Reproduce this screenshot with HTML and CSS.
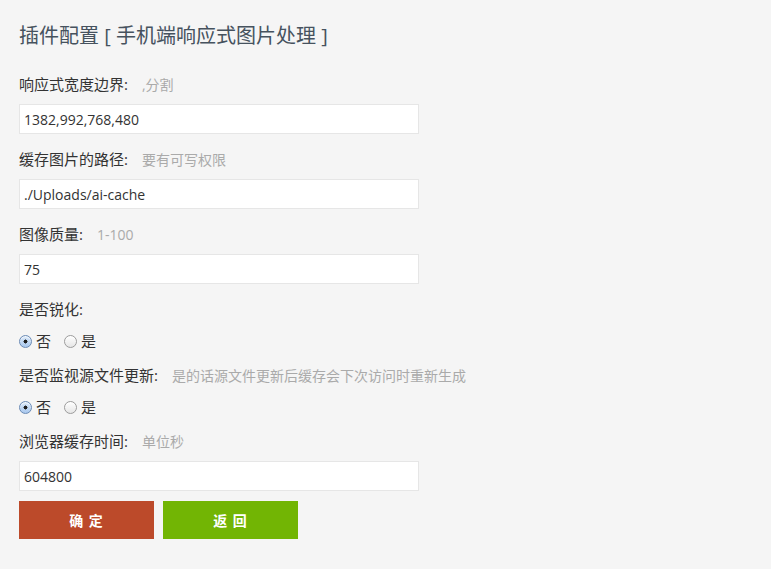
FILE: index.html
```html
<!DOCTYPE html>
<html lang="zh-CN">
<head>
<meta charset="utf-8">
<title>插件配置</title>
<link rel="stylesheet" href="styles.css">
</head>
<body>
<div class="page">
  <h2 class="title">插件配置 [ 手机端响应式图片处理 ]</h2>
  <form class="form">
    <div class="group">
      <div class="label">响应式宽度边界:<span class="hint">,分割</span></div>
      <input class="text" type="text" value="1382,992,768,480">
    </div>
    <div class="group">
      <div class="label">缓存图片的路径:<span class="hint">要有可写权限</span></div>
      <input class="text" type="text" value="./Uploads/ai-cache">
    </div>
    <div class="group">
      <div class="label">图像质量:<span class="hint">1-100</span></div>
      <input class="text" type="text" value="75">
    </div>
    <div class="group group-radio">
      <div class="label">是否锐化:</div>
      <div class="radios">
        <label class="opt"><input class="radio" type="radio" name="sharpen" checked>否</label>
        <label class="opt"><input class="radio" type="radio" name="sharpen">是</label>
      </div>
    </div>
    <div class="group group-radio">
      <div class="label">是否监视源文件更新:<span class="hint">是的话源文件更新后缓存会下次访问时重新生成</span></div>
      <div class="radios">
        <label class="opt"><input class="radio" type="radio" name="watch" checked>否</label>
        <label class="opt"><input class="radio" type="radio" name="watch">是</label>
      </div>
    </div>
    <div class="group group-last">
      <div class="label">浏览器缓存时间:<span class="hint">单位秒</span></div>
      <input class="text" type="text" value="604800">
    </div>
    <div class="actions">
      <button type="button" class="btn btn-ok">确 定</button>
      <button type="button" class="btn btn-back">返 回</button>
    </div>
  </form>
</div>
</body>
</html>
```
FILE: styles.css
```css
html, body {
  margin: 0;
  padding: 0;
  background: #f5f5f5;
}
body {
  font-family: "Open Sans", "Noto Sans CJK SC", sans-serif;
  color: #333;
}
.page {
  padding: 22px 19px 0;
}
.title {
  margin: 0 0 24px;
  font-size: 20px;
  line-height: 28px;
  font-weight: normal;
  color: #46525e;
}
.form {
  margin: 0;
}
.group {
  margin-bottom: 15px;
}
.group-radio {
  margin-bottom: 12px;
}
.group-last {
  margin-bottom: 10px;
}
.label {
  font-size: 15px;
  line-height: 20px;
  height: 20px;
  margin-bottom: 10px;
  color: #333;
  white-space: nowrap;
}
.hint {
  margin-left: 14px;
  font-size: 14px;
  color: #aaa;
}
.text {
  display: block;
  box-sizing: border-box;
  width: 400px;
  height: 30px;
  margin: 0;
  padding: 0 4px;
  border: 1px solid #e6e6e6;
  background: #fff;
  font-family: "Open Sans", "Noto Sans CJK SC", sans-serif;
  font-size: 14px;
  color: #333;
  outline: none;
}
.radios {
  display: flex;
  align-items: center;
  height: 24px;
}
.opt {
  display: inline-flex;
  align-items: center;
  gap: 4px;
  margin-right: 13px;
  font-size: 15px;
  line-height: 20px;
  color: #333;
}
.radio {
  appearance: none;
  -webkit-appearance: none;
  box-sizing: border-box;
  width: 13px;
  height: 13px;
  margin: 0;
  border-radius: 50%;
  border: 1px solid #9c9c9c;
  background: linear-gradient(#ffffff, #e6e6e6);
  box-shadow: inset 0 1px 1px rgba(255,255,255,0.8);
}
.radio:checked {
  border-color: #6b8bb5;
  background:
    radial-gradient(circle, #1e1e1e 0 1.8px, transparent 2.2px),
    linear-gradient(#dbe9f9, #a9c8ee);
}
.actions {
  display: flex;
  gap: 9px;
}
.btn {
  width: 135px;
  height: 38px;
  margin: 0;
  padding: 0;
  border: none;
  color: #fff;
  font-family: "Open Sans", "Noto Sans CJK SC", sans-serif;
  font-size: 14px;
  font-weight: bold;
  letter-spacing: 1px;
  cursor: pointer;
}
.btn-ok {
  background: #bc4a2a;
}
.btn-back {
  background: #72b504;
}
```
